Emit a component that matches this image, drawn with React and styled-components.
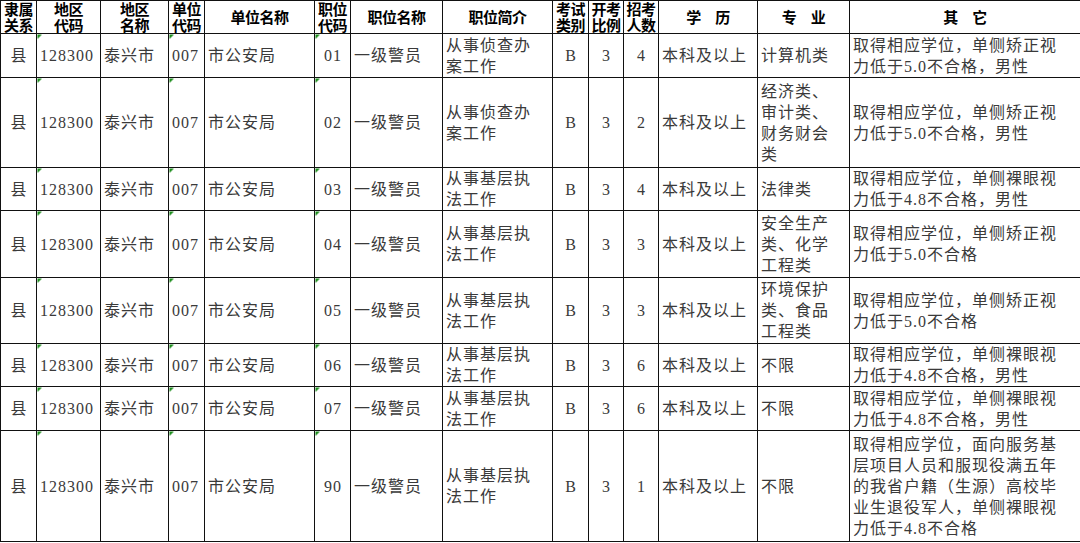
import React from 'react';
import styled, { createGlobalStyle } from 'styled-components';

const GlobalStyle = createGlobalStyle`
  html, body { margin:0; padding:0; background:#fff; }
  body { font-family:'Liberation Serif', 'Noto Sans CJK SC', serif; }
`;

const Sheet = styled.table`
  width:1080px;
  table-layout:fixed;
  border-collapse:collapse;
  color:#3a3a3a;
`;
const Col = styled.col`width:${({ $w }) => $w}px;`;
const Row = styled.tr`height:${({ $h }) => $h}px;`;
const HeadCell = styled.th`
  border:1px solid #111;
  padding:0;
  font-family:'Noto Sans CJK SC', sans-serif;
  font-size:15px;
  font-weight:bold;
  line-height:16px;
  color:#000;
  text-align:center;
  vertical-align:middle;
  white-space:pre-line;
  letter-spacing:-0.5px;
`;
const Cell = styled.td`
  border:1px solid #111;
  border-left-color:${({ $gray }) => $gray ? '#808080' : '#111'};
  padding:0 2px 0 3px;
  font-size:16px;
  line-height:21px;
  letter-spacing:1px;
  text-align:${({ $align }) => $align || 'left'};
  vertical-align:middle;
  white-space:pre-line;
  overflow:hidden;
  background:${({ $mark }) => $mark ? 'linear-gradient(135deg, #1f8f1f 3px, transparent 3px)' : 'transparent'};
`;

const widths = [36, 64, 68, 36, 110, 36, 92, 110, 36, 35, 35, 99, 92, 231];
const heads = ['隶属\n关系', '地区\n代码', '地区\n名称', '单位\n代码', '单位名称', '职位\n代码', '职位名称', '职位简介', '考试\n类别', '开考\n比例', '招考\n人数', '学　历', '专　业', '其　它'];

// column settings: alignment, green marker, grey left line
const cols = [
  { align: 'center' },
  { mark: true, gray: true },
  {},
  { mark: true, gray: true },
  {},
  { align: 'center', mark: true, gray: true },
  { gray: true },
  {},
  { align: 'center' },
  { align: 'center', gray: true },
  { align: 'center', gray: true },
  {},
  {},
  {},
];

const zhen = '从事侦查办\n案工作';
const jiceng = '从事基层执\n法工作';
const jz50m = '取得相应学位，单侧矫正视\n力低于5.0不合格，男性';
const jz50 = '取得相应学位，单侧矫正视\n力低于5.0不合格';
const ly48m = '取得相应学位，单侧裸眼视\n力低于4.8不合格，男性';

const rows = [
  { h: 44, code: '01', intro: zhen, num: '4', major: '计算机类', other: jz50m },
  { h: 90, code: '02', intro: zhen, num: '2', major: '经济类、\n审计类、\n财务财会\n类', other: jz50m },
  { h: 43, code: '03', intro: jiceng, num: '4', major: '法律类', other: ly48m },
  { h: 67, code: '04', intro: jiceng, num: '3', major: '安全生产\n类、化学\n工程类', other: jz50 },
  { h: 66, code: '05', intro: jiceng, num: '3', major: '环境保护\n类、食品\n工程类', other: jz50 },
  { h: 43, code: '06', intro: jiceng, num: '6', major: '不限', other: ly48m },
  { h: 44, code: '07', intro: jiceng, num: '6', major: '不限', other: ly48m },
  { h: 111, code: '90', intro: jiceng, num: '1', major: '不限', other: '取得相应学位，面向服务基\n层项目人员和服现役满五年\n的我省户籍（生源）高校毕\n业生退役军人，单侧裸眼视\n力低于4.8不合格' },
];

const toCells = (r) => ['县', '128300', '泰兴市', '007', '市公安局', r.code, '一级警员', r.intro, 'B', '3', r.num, '本科及以上', r.major, r.other];

export default function App() {
  return (
    <>
      <GlobalStyle />
      <Sheet>
        <colgroup>
          {widths.map((w, i) => <Col key={i} $w={w} />)}
        </colgroup>
        <thead>
          <Row $h={33}>
            {heads.map((h, i) => <HeadCell key={i}>{h}</HeadCell>)}
          </Row>
        </thead>
        <tbody>
          {rows.map((r, ri) => (
            <Row key={ri} $h={r.h}>
              {toCells(r).map((v, ci) => (
                <Cell key={ci} $align={cols[ci].align} $mark={cols[ci].mark} $gray={cols[ci].gray}>{v}</Cell>
              ))}
            </Row>
          ))}
        </tbody>
      </Sheet>
    </>
  );
}
